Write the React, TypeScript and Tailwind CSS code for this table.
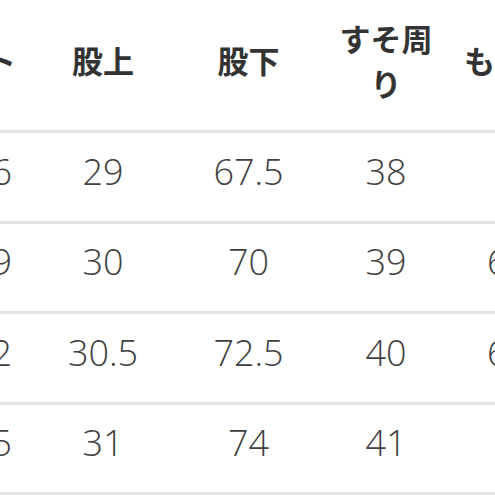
type Column = {
  label: string;
  width: string;
  head: string;
  cell: string;
};

const columns: Column[] = [
  { label: "ウエスト", width: "w-[180px]", head: "justify-end pr-[14px]", cell: "justify-end pr-[18px]" },
  { label: "股上", width: "w-[146px]", head: "justify-center", cell: "justify-center" },
  { label: "股下", width: "w-[145px]", head: "justify-center", cell: "justify-center" },
  { label: "すそ周り", width: "w-[130px]", head: "justify-center px-[17px]", cell: "justify-center" },
  { label: "もも周り", width: "w-[142px]", head: "justify-start pl-[13px]", cell: "justify-center" },
];

const rows: string[][] = [
  ["66", "29", "67.5", "38", "60"],
  ["69", "30", "70", "39", "62.5"],
  ["72", "30.5", "72.5", "40", "64.5"],
  ["75", "31", "74", "41", "66"],
];

export default function App() {
  return (
    <div className="h-[495px] w-[495px] overflow-hidden bg-white">
      <div className="ml-[-150px] w-[743px]">
        {/* header */}
        <div className="flex h-[133px] border-b-[3px] border-[#e3e3e3]">
          {columns.map((col) => (
            <div
              key={col.label}
              className={`flex shrink-0 items-center pb-[11px] text-center font-['Noto_Sans_CJK_JP','Noto_Sans',sans-serif] text-[31px] font-bold leading-[45px] text-[#333333] ${col.width} ${col.head}`}
            >
              <span className="whitespace-normal">{col.label}</span>
            </div>
          ))}
        </div>
        {rows.map((row, i) => (
          <div key={i} className="flex h-[90.5px] border-b-[3px] border-[#e3e3e3]">
            {row.map((value, j) => (
              <div
                key={j}
                className={`flex shrink-0 items-center pb-[10px] font-['Open_Sans','Noto_Sans',sans-serif] text-[36px] font-light text-[#404040] ${columns[j].width} ${columns[j].cell}`}
              >
                {value}
              </div>
            ))}
          </div>
        ))}
      </div>
    </div>
  );
}
